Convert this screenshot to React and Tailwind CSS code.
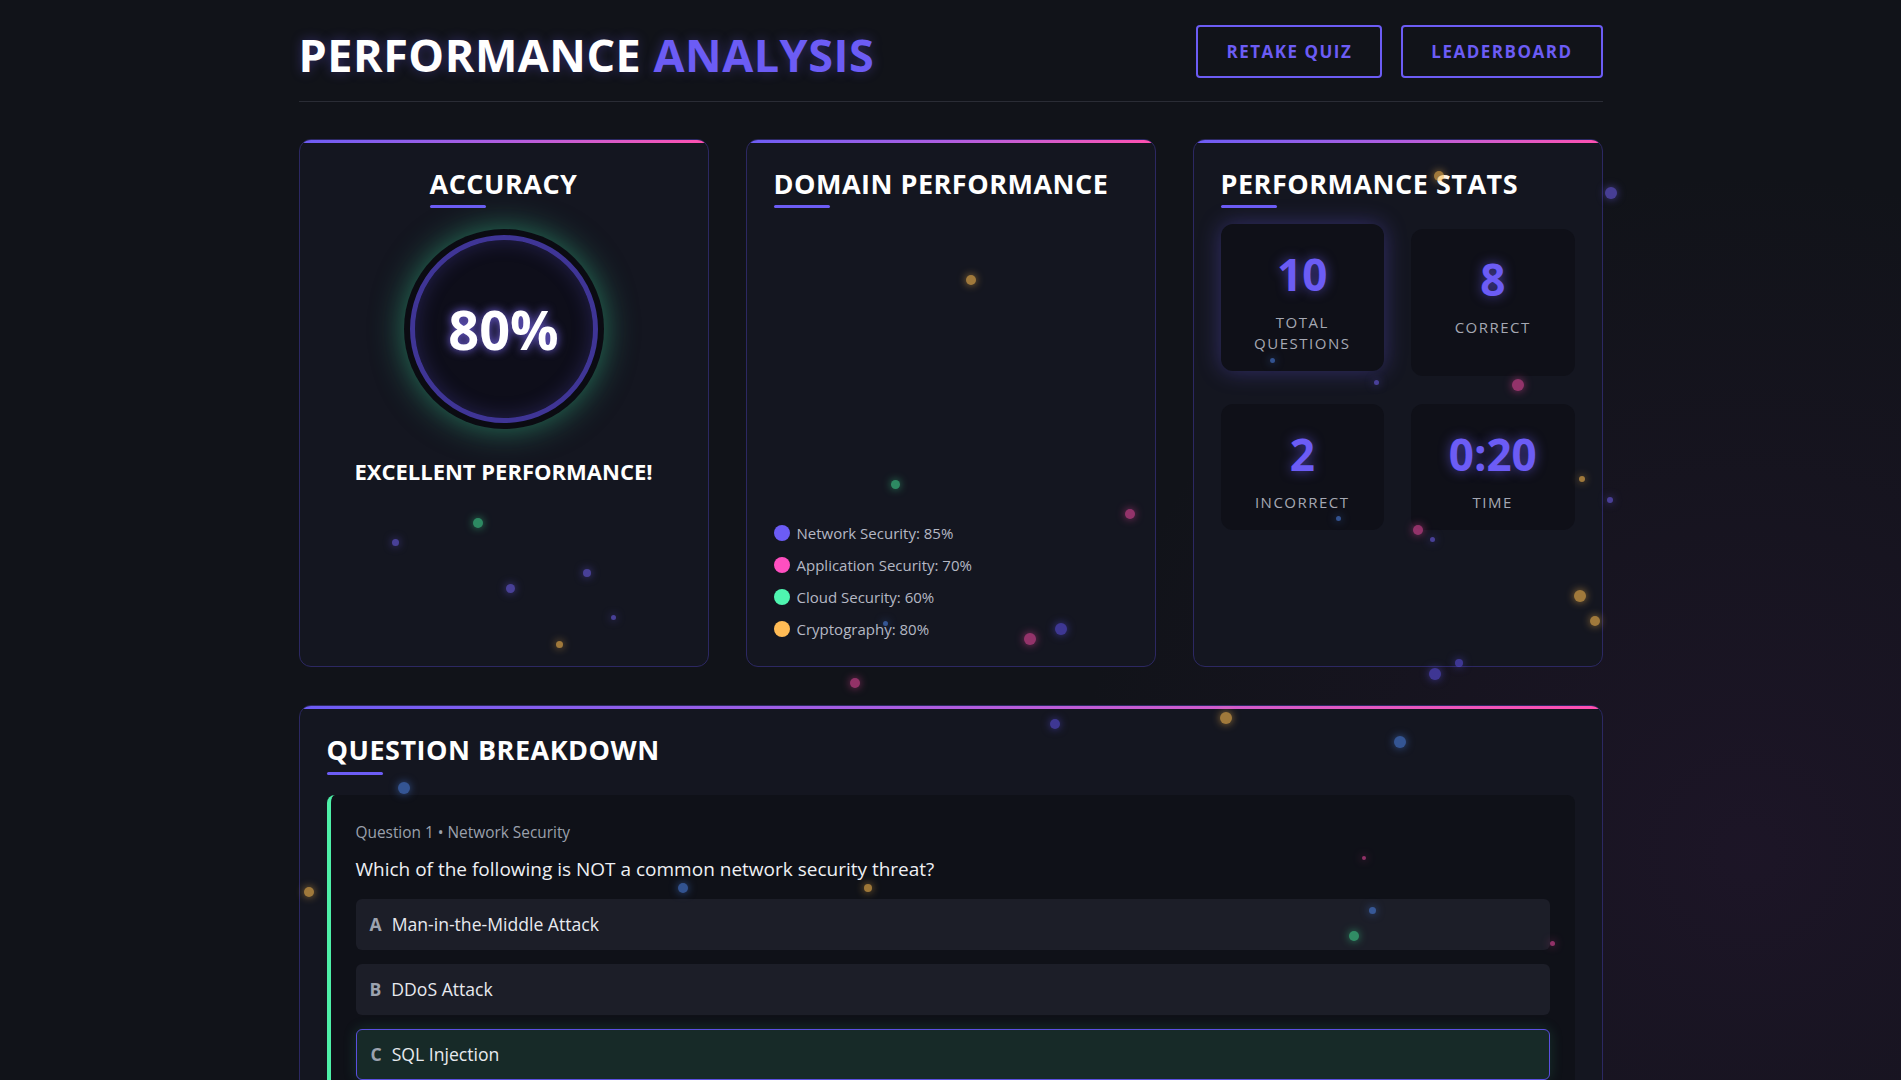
// App.jsx
import React from 'react';

const particles = [
  { x: 1439, y: 176, s: 10, c: '#fdbb4d' },
  { x: 1611, y: 193, s: 12, c: '#6c5ce7' },
  { x: 971, y: 280, s: 10, c: '#fdbb4d' },
  { x: 895, y: 484, s: 9, c: '#3fd68f' },
  { x: 1130, y: 514, s: 10, c: '#e8479c' },
  { x: 478, y: 523, s: 10, c: '#3fd68f' },
  { x: 395, y: 542, s: 7, c: '#6c5ce7' },
  { x: 587, y: 573, s: 8, c: '#6c5ce7' },
  { x: 510, y: 588, s: 9, c: '#6c5ce7' },
  { x: 613, y: 617, s: 5, c: '#6c5ce7' },
  { x: 559, y: 644, s: 7, c: '#fdbb4d' },
  { x: 1030, y: 639, s: 12, c: '#e8479c' },
  { x: 1061, y: 629, s: 12, c: '#5a4ee0' },
  { x: 885, y: 623, s: 5, c: '#4a7fe0' },
  { x: 855, y: 683, s: 10, c: '#e8479c' },
  { x: 1518, y: 385, s: 12, c: '#e8479c' },
  { x: 1376, y: 382, s: 5, c: '#6c5ce7' },
  { x: 1272, y: 360, s: 5, c: '#4a7fe0' },
  { x: 1338, y: 518, s: 5, c: '#4a7fe0' },
  { x: 1418, y: 530, s: 10, c: '#e8479c' },
  { x: 1432, y: 539, s: 5, c: '#6c5ce7' },
  { x: 1582, y: 479, s: 6, c: '#fdbb4d' },
  { x: 1610, y: 500, s: 6, c: '#6c5ce7' },
  { x: 1580, y: 596, s: 12, c: '#fdbb4d' },
  { x: 1595, y: 621, s: 10, c: '#fdbb4d' },
  { x: 1435, y: 674, s: 12, c: '#5a4ee0' },
  { x: 1459, y: 663, s: 8, c: '#5a4ee0' },
  { x: 1055, y: 724, s: 10, c: '#5a4ee0' },
  { x: 1226, y: 718, s: 12, c: '#fdbb4d' },
  { x: 1400, y: 742, s: 12, c: '#4a7fe0' },
  { x: 404, y: 788, s: 12, c: '#4a7fe0' },
  { x: 309, y: 892, s: 10, c: '#fdbb4d' },
  { x: 683, y: 888, s: 10, c: '#4a7fe0' },
  { x: 868, y: 888, s: 8, c: '#fdbb4d' },
  { x: 1364, y: 858, s: 4, c: '#e8479c' },
  { x: 1372, y: 910, s: 7, c: '#4a7fe0' },
  { x: 1354, y: 936, s: 10, c: '#3fd68f' },
  { x: 1552, y: 943, s: 5, c: '#e8479c' },
];

const domains = [
  { label: 'Network Security: 85%', color: 'bg-[#6c5cf5]' },
  { label: 'Application Security: 70%', color: 'bg-[#ff4fc0]' },
  { label: 'Cloud Security: 60%', color: 'bg-[#4ff5b0]' },
  { label: 'Cryptography: 80%', color: 'bg-[#ffbb55]' },
];

const stats = [
  { value: '10', label: ['TOTAL', 'QUESTIONS'], lifted: true },
  { value: '8', label: ['CORRECT'] },
  { value: '2', label: ['INCORRECT'] },
  { value: '0:20', label: ['TIME'] },
];

const options = [
  { key: 'A', text: 'Man-in-the-Middle Attack' },
  { key: 'B', text: 'DDoS Attack' },
  { key: 'C', text: 'SQL Injection', correct: true },
];

function CardHeading({ children, center }) {
  return (
    <div className={center ? 'flex flex-col items-center' : ''}>
      <div className="inline-flex flex-col">
        <h2 className="whitespace-nowrap text-[27px] font-bold leading-[1.2] tracking-[0.5px] text-white">{children}</h2>
        <div className="mt-[5px] h-[3px] w-14 rounded-full bg-[#6c5cf5]" />
      </div>
    </div>
  );
}

function Card({ children, className = '' }) {
  return (
    <div className={`overflow-hidden rounded-xl border border-[#2c2862] bg-[#141620] ${className}`}>
      <div className="h-[3px] w-full bg-linear-to-r from-[#6c5cf5] via-[#b05de0] to-[#ff4fb0]" />
      {children}
    </div>
  );
}

export default function App() {
  return (
    <div
      className="relative min-h-screen overflow-hidden bg-[#111319] bg-[radial-gradient(circle_at_92%_75%,rgba(80,30,100,0.18),transparent_35%)] text-white"
      style={{ fontFamily: '"Open Sans", "Noto Sans", sans-serif' }}
    >
      <div className="mx-auto max-w-[1400px] px-12">
        {/* Header */}
        <header className="flex items-start justify-between border-b border-[#2a2c35] pt-[25px] pb-[19px]">
          <h1 className="mt-[3px] text-[45px] font-bold leading-[1.2] tracking-[0.5px] [text-shadow:0_0_12px_rgba(108,92,245,0.35)]">
            PERFORMANCE <span className="text-[#6c5cf5]">ANALYSIS</span>
          </h1>
          <div className="flex gap-[19px]">
            <button className="h-[53px] rounded-[4px] border-2 border-[#6c5cf5] px-[28px] text-[17px] font-bold tracking-[1.5px] text-[#6c5cf5]">
              RETAKE QUIZ
            </button>
            <button className="h-[53px] rounded-[4px] border-2 border-[#6c5cf5] px-[28px] text-[17px] font-bold tracking-[1.5px] text-[#6c5cf5]">
              LEADERBOARD
            </button>
          </div>
        </header>

        {/* Top cards */}
        <div className="mt-[37px] grid grid-cols-3 gap-[37px]">
          {/* Accuracy */}
          <Card className="flex flex-col">
            <div className="flex flex-col items-center px-[27px] pt-[25px]">
              <CardHeading center>ACCURACY</CardHeading>
              <div className="mt-[21px] flex h-[200px] w-[200px] items-center justify-center rounded-full bg-[#0b0b12] p-[6px] shadow-[0_0_32px_rgba(52,200,140,0.55)]">
                <div className="flex h-full w-full items-center justify-center rounded-full border-[5px] border-[#3f3596] bg-[#0e0e1a] shadow-[inset_0_0_20px_rgba(108,92,245,0.25)]">
                  <span className="text-[54px] font-bold text-white [text-shadow:0_0_10px_rgba(130,110,255,0.9)]">80%</span>
                </div>
              </div>
              <p className="mt-[29px] text-[22px] font-bold leading-[1.2] text-white">EXCELLENT PERFORMANCE!</p>
            </div>
          </Card>

          {/* Domain performance */}
          <Card>
            <div className="px-[27px] pt-[25px] pb-[25px]">
              <CardHeading>DOMAIN PERFORMANCE</CardHeading>
              <div className="mt-5 h-[293px]" />
              <ul className="flex flex-col gap-2">
                {domains.map((d) => (
                  <li key={d.label} className="flex h-6 items-center gap-[7px] text-[15px] text-[#b4b8c4]">
                    <span className={`h-4 w-4 rounded-full ${d.color}`} />
                    {d.label}
                  </li>
                ))}
              </ul>
            </div>
          </Card>

          {/* Performance stats */}
          <Card>
            <div className="px-[27px] pt-[25px]">
              <CardHeading>PERFORMANCE STATS</CardHeading>
              <div className="mt-[21px] grid grid-cols-2 gap-x-[27px] gap-y-7">
                {stats.map((s) => (
                  <div
                    key={s.value}
                    className={`flex flex-col items-center rounded-xl bg-[#0f1018] pt-6 pb-[17px] ${
                      s.lifted ? '-translate-y-[5px] shadow-[0_0_22px_rgba(108,92,245,0.35)]' : ''
                    }`}
                  >
                    <span className="text-[44px] font-bold leading-[1.2] text-[#6c5cf5] [text-shadow:0_0_12px_rgba(108,92,245,0.6)]">
                      {s.value}
                    </span>
                    <span className="mt-[11px] text-center text-[15px] leading-[21px] tracking-[1.5px] text-[#a5a8b3]">
                      {s.label.map((l) => (
                        <span key={l} className="block">{l}</span>
                      ))}
                    </span>
                  </div>
                ))}
              </div>
            </div>
          </Card>
        </div>

        {/* Question breakdown */}
        <Card className="mt-[38px]">
          <div className="px-[27px] pt-[25px] pb-8">
            <CardHeading>QUESTION BREAKDOWN</CardHeading>
            <div className="mt-5 rounded-lg border-l-4 border-[#4ef0a8] bg-[#0f1118] px-[25px] py-6">
              <p className="text-[15.4px] leading-[28px] text-[#9aa0ac]">Question 1 • Network Security</p>
              <p className="mt-[9px] text-[19px] leading-[27px] text-[#eef0f4]">
                Which of the following is NOT a common network security threat?
              </p>
              <div className="mt-4 flex flex-col gap-[14px]">
                {options.map((o) => (
                  <div
                    key={o.key}
                    className={`flex h-[51px] items-center gap-[10px] rounded-md px-[14px] text-[17.6px] ${
                      o.correct
                        ? 'border border-[#5b4fe0] bg-[#172a28] shadow-[0_0_14px_rgba(60,200,140,0.18)]'
                        : 'bg-[#1c1e28]'
                    }`}
                  >
                    <span className="font-bold text-[#9ca3af]">{o.key}</span>
                    <span className="text-[#e8eaef]">{o.text}</span>
                  </div>
                ))}
              </div>
            </div>
          </div>
        </Card>
      </div>

      {/* Floating particles */}
      <div className="pointer-events-none absolute inset-0">
        {particles.map((p, i) => (
          <span
            key={i}
            className="absolute rounded-full opacity-60"
            style={{
              left: p.x - p.s / 2,
              top: p.y - p.s / 2,
              width: p.s,
              height: p.s,
              background: p.c,
              boxShadow: `0 0 8px ${p.c}`,
            }}
          />
        ))}
      </div>
    </div>
  );
}
